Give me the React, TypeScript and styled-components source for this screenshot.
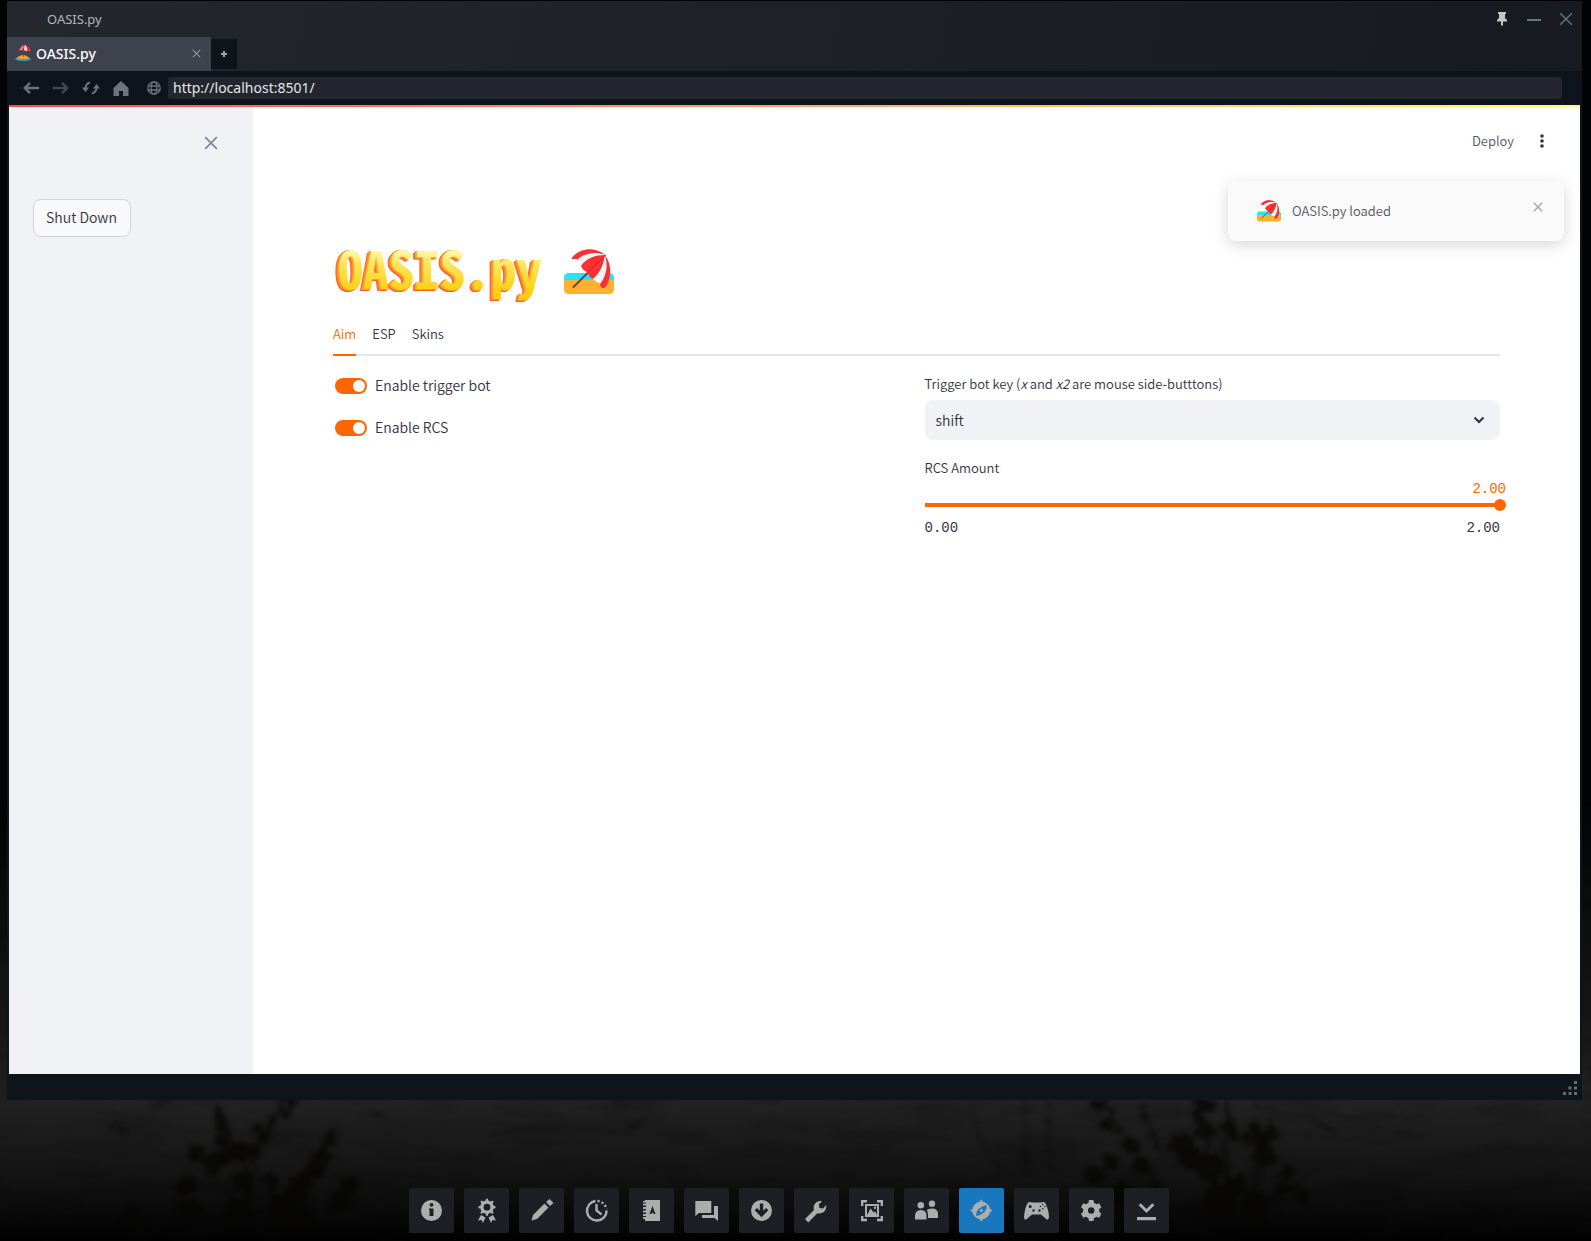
import React, { useState } from "react";
import styled, { createGlobalStyle, css } from "styled-components";

const chromeFont = `"Noto Sans", "Open Sans", sans-serif`;
const appFont = `"Noto Sans CJK SC", "Noto Sans", sans-serif`;
const monoFont = `"Liberation Mono", "DejaVu Sans Mono", monospace`;
const accent = "#ff6600";
const ink = "#31333f";

const GlobalStyle = createGlobalStyle`
  *, *::before, *::after { box-sizing: border-box; }
  body { margin: 0; background: #050505; }
  button, input, select { font: inherit; color: inherit; margin: 0; }
  button { background: none; border: 0; padding: 0; cursor: pointer; }
  svg { display: block; }
`;

const Desktop = styled.div`
  position: relative;
  isolation: isolate;
  min-height: 100vh;
  display: flex;
  flex-direction: column;
  padding: 1px 9px 8px 7px;
  background: #020304;
  overflow: hidden;
`;

const Wallpaper = styled.svg`
  position: absolute;
  z-index: -1;
  left: 0;
  bottom: 0;
  width: 100%;
  height: 440px;
`;

const Window = styled.main`
  flex: 1;
  display: flex;
  flex-direction: column;
  background: #0e141b;
`;

const Chrome = styled.header`
  font-family: ${chromeFont};
  background: linear-gradient(100deg, #25272f, #171a21);
`;

const TitleBar = styled.div`
  height: 36px;
  display: flex;
  align-items: center;
  padding-left: 40px;
  font-size: 13px;
  color: #b4b6b9;
`;

const WindowTitle = styled.span`
  flex: 1;
`;

const WindowButton = styled.button`
  width: 32px;
  height: 32px;
  display: grid;
  place-items: center;
  color: ${(p) => p.color ?? "#67757d"};
`;

const TabStrip = styled.div`
  display: flex;
  align-items: center;
  height: 34px;
`;

const BrowserTab = styled.div`
  width: 204px;
  height: 34px;
  display: flex;
  align-items: center;
  gap: 5px;
  padding: 0 8px 2px;
  background: #3d424d;
  color: #fff;
  font-size: 14px;
  font-weight: 500;
`;

const TabTitle = styled.span`
  flex: 1;
`;

const TabClose = styled.button`
  width: 14px;
  height: 14px;
  display: grid;
  place-items: center;
  color: #a0a3a8;
`;

const NewTab = styled.button`
  width: 26px;
  height: 30px;
  display: grid;
  place-items: center;
  background: #0e141b;
  color: #a5a59f;
`;

const AddressBar = styled.form`
  display: flex;
  align-items: center;
  height: 34px;
  padding: 0 20px 0 9px;
  background: #0e141b;
`;

const NavButton = styled.button<{ $dim?: boolean }>`
  width: 30px;
  height: 30px;
  display: grid;
  place-items: center;
  color: ${(p) => (p.$dim ? "#424750" : "#6e737e")};
`;

const SiteMark = styled.label`
  width: 32px;
  display: grid;
  place-items: center;
  padding-left: 3px;
  color: #6e737e;
`;

const UrlInput = styled.input`
  flex: 1;
  min-width: 0;
  height: 22px;
  padding: 0 5px;
  border: 0;
  border-radius: 3px;
  background: #23262e;
  color: #e4e6e8;
  font-size: 14px;
  line-height: 22px;
  outline: none;
`;

const Page = styled.div`
  position: relative;
  flex: 1;
  display: flex;
  flex-direction: column;
  margin: 0 2px;
  background: #fff;
  color: ${ink};
  font-family: ${appFont};
  font-weight: 350;
`;

const Rainbow = styled.div`
  height: 2px;
  background: linear-gradient(90deg, #ff4b4b, #fffd80);
`;

const PageBody = styled.div`
  flex: 1;
  display: flex;
`;

const Sidebar = styled.aside`
  width: 244px;
  flex: none;
  display: flex;
  flex-direction: column;
  align-items: flex-start;
  padding: 20px 26px 20px 24px;
  background: #f0f2f6;
`;

const SidebarClose = styled.button`
  align-self: flex-end;
  width: 32px;
  height: 32px;
  margin-bottom: 40px;
  display: grid;
  place-items: center;
  color: #808495;
`;

const ShutDownButton = styled.button`
  height: 38px;
  padding: 0 13px 2px 12px;
  border: 1px solid #d2d4d9;
  border-radius: 8px;
  background: #f9f9fb;
  font-size: 14px;
  line-height: 20px;
`;

const Main = styled.section`
  flex: 1;
  min-width: 0;
  display: flex;
  flex-direction: column;
`;

const Toolbar = styled.div`
  height: 68px;
  display: flex;
  justify-content: flex-end;
  align-items: center;
  gap: 16px;
  padding: 0 26px;
`;

const DeployButton = styled.button`
  font-size: 13px;
  line-height: 20px;
  color: #555763;
`;

const MenuButton = styled.button`
  width: 24px;
  height: 24px;
  display: grid;
  place-items: center;
`;

const Content = styled.div`
  padding: 64px 80px;
`;

const Heading = styled.div`
  display: flex;
  align-items: center;
  gap: 22px;
  height: 66px;
  margin-bottom: 11px;
`;

const Wordmark = styled.h1`
  margin: 0;
  padding: 0 0 10px 5px;
  font: 700 51px/64px "Noto Sans Mono CJK SC", "DejaVu Sans Mono", monospace;
  color: transparent;
  background: linear-gradient(#fffbb8 18%, #ffe65a 40%, #ffd012 75%);
  background-clip: text;
  -webkit-background-clip: text;
  filter: drop-shadow(-1px 0 0 #ffb52e) drop-shadow(-1px 1px 0 #ff9a2a)
    drop-shadow(-1px 0 0 #ff7d2c) drop-shadow(-1px 1px 0 #ff5f2c);
`;

const TabList = styled.div`
  display: flex;
  gap: 16px;
  border-bottom: 2px solid #e6e6e9;
`;

const Tab = styled.button<{ $active: boolean }>`
  height: 40px;
  margin-bottom: -2px;
  padding-bottom: 2px;
  border-bottom: 2px solid transparent;
  font-size: 13px;
  line-height: 20px;
  ${(p) =>
    p.$active &&
    css`
      color: ${accent};
      border-bottom-color: ${accent};
    `}
`;

const Columns = styled.div`
  display: grid;
  grid-template-columns: 1fr 1fr;
  gap: 16px;
  padding-top: 18px;
`;

const ToggleList = styled.div`
  display: flex;
  flex-direction: column;
  gap: 18px;
  margin-top: -1px;
  padding-left: 2px;
`;

const ToggleLabel = styled.label`
  display: flex;
  align-items: center;
  gap: 8px;
  font-size: 14px;
  line-height: 24px;
`;

const ToggleInput = styled.input`
  && {
    margin-top: 2px;
  }
  appearance: none;
  display: flex;
  align-items: center;
  width: 32px;
  height: 16px;
  padding: 0 2px;
  border-radius: 8px;
  background: #a3a8b8;
  &::after {
    content: "";
    width: 12px;
    height: 12px;
    border-radius: 50%;
    background: #fff;
  }
  &:checked {
    background: ${accent};
    justify-content: flex-end;
  }
`;

const Field = styled.div`
  display: flex;
  flex-direction: column;
  margin-bottom: 18px;
`;

const FieldLabel = styled.label`
  font-size: 13px;
  line-height: 20px;
  margin-bottom: 6px;
`;

const SelectBox = styled.div`
  display: grid;
  align-items: center;
  & > * {
    grid-area: 1 / 1;
  }
  & > svg {
    justify-self: end;
    margin-right: 12px;
    pointer-events: none;
  }
`;

const Select = styled.select`
  appearance: none;
  width: 100%;
  height: 40px;
  padding: 0 11px;
  border: 0;
  border-radius: 8px;
  background: #f0f2f6;
  font-size: 14px;
`;

const CurrentValue = styled.output`
  align-self: flex-end;
  margin: -5px -6px 0 0;
  font: 14px/20px ${monoFont};
  color: ${accent};
`;

const Slider = styled.input`
  appearance: none;
  height: 12px;
  width: calc(100% + 6px);
  background: linear-gradient(${accent}, ${accent}) left center / calc(100% - 6px) 4px no-repeat;
  &::-webkit-slider-thumb {
    appearance: none;
    width: 12px;
    height: 12px;
    border-radius: 50%;
    background: ${accent};
  }
`;

const SliderScale = styled.div`
  display: flex;
  justify-content: space-between;
  padding-top: 7px;
  font: 14px/20px ${monoFont};
`;

const Toast = styled.div`
  position: absolute;
  top: 76px;
  right: 16px;
  width: 336px;
  height: 60px;
  display: flex;
  align-items: center;
  gap: 11px;
  padding: 0 18px 0 29px;
  border-radius: 8px;
  background: #fafafa;
  box-shadow: 0 4px 16px rgba(0, 0, 0, 0.16);
  color: #54565f;
  font-size: 13px;
  line-height: 20px;
`;

const ToastText = styled.span`
  flex: 1;
`;

const ToastClose = styled.button`
  width: 16px;
  height: 16px;
  margin-bottom: 8px;
  display: grid;
  place-items: center;
  color: #a9aaad;
`;

const WindowFooter = styled.footer`
  height: 26px;
  display: flex;
  justify-content: flex-end;
  align-items: center;
  padding: 2px 5px 0;
  color: #686c72;
`;

const Dock = styled.nav`
  display: flex;
  justify-content: center;
  gap: 10px;
  padding: 88px 11px 0 0;
`;

const DockButton = styled.button<{ $active?: boolean }>`
  width: 45px;
  height: 45px;
  border-radius: 2px;
  color: #abadaf;
  background: ${(p) => (p.$active ? "#1977be" : "#1e1f25")};
`;

function Cross({ size, stroke }: { size: number; stroke: number }) {
  return (
    <svg width={size} height={size} viewBox="0 0 12 12" fill="none" stroke="currentColor" strokeWidth={stroke}>
      <path d="M1 1 11 11M11 1 1 11" />
    </svg>
  );
}

function Beach({ width }: { width: number }) {
  return (
    <svg width={width} viewBox="0 0 50 46" aria-hidden="true">
      <path d="M5 24H45Q50 24 50 29V34H0V29Q0 24 5 24Z" fill="#26e3fb" />
      <path d="M0 31H50V40Q50 45 45 45H5Q0 45 0 40Z" fill="#ffb02e" />
      <path d="M9.5 38 41 6.5" stroke="#6d4534" strokeWidth="1.8" strokeLinecap="round" />
      <path d="M8 10C7 7 18-1 27 .3C33 1 38 3 41 6C30 2 19 5 14 11C12 9 9 11 8 10Z" fill="#fb2f34" />
      <path d="M13.500 11C18 5 30 2 41 6C32 6 24 9 17.500 17C17 13 15 11 13.500 11Z" fill="#f4f4f4" />
      <path d="M17 17C22 9 32 6 41 6C40 15 36 24 30 30C26 29 25 27 24 24C22 22 18 21 17 17Z" fill="#fb2f34" />
      <path d="M29 30C36 24 40 15 41 6C45 15 44 26 37 35C35 34 32 33 29 30Z" fill="#f4f4f4" />
      <path d="M41 6C48 15 48 30 41 38.500C39 40 35 38 36.500 34.500C43 26 44 15 41 6Z" fill="#fb2f34" />
      <path d="M25 22.500 40 7.500" stroke="#b01e2c" strokeWidth=".8" />
    </svg>
  );
}

function Favicon() {
  return (
    <svg width="16" height="16" viewBox="0 0 16 16" aria-hidden="true">
      <ellipse cx="8" cy="14" rx="8" ry="2" fill="#3f8fd0" />
      <path d="M1.500 13.500Q4 10 8 10Q12 10 14.500 13.500Q8 15 1.500 13.500Z" fill="#f2a12e" />
      <path d="M9 5 8.500 11.500" stroke="#70482f" />
      <path d="M3.500 6Q4 .5 10 0Q16 1.500 15.500 7Q13 5.500 12 6.500Q10 4.500 8 5.500Q6 4.500 3.500 6Z" fill="#de2d42" />
      <path d="M6.500 4.900Q7 2 10 0Q7 1 5 5.200ZM10 0Q9 3 9 5.200Q10.500 5 12 6.500Q13 3 10 0Z" fill="#f5eee5" />
    </svg>
  );
}

function gearPath(cx: number, cy: number, outer: number, inner: number, teeth: number, share: number) {
  const points: string[] = [];
  for (let i = 0; i < teeth; i++) {
    const mid = -Math.PI / 2 + (i * 2 * Math.PI) / teeth;
    const step = Math.PI / teeth;
    const spots: [number, number][] = [
      [mid - step * (share + 0.15), inner],
      [mid - step * share * 0.8, outer],
      [mid + step * share * 0.8, outer],
      [mid + step * (share + 0.15), inner],
    ];
    spots.forEach(([a, r]) => points.push(`${(cx + r * Math.cos(a)).toFixed(2)} ${(cy + r * Math.sin(a)).toFixed(2)}`));
  }
  return `M${points.join("L")}Z`;
}

const hole = (cx: number, cy: number, r: number) => `M${cx - r} ${cy}a${r} ${r} 0 1 0 ${2 * r} 0a${r} ${r} 0 1 0 ${-2 * r} 0Z`;

const dockItems: { name: string; active?: boolean; art: React.ReactNode }[] = [
  {
    name: "Game info",
    art: <path fillRule="evenodd" d={`${hole(22.5, 22.5, 10.5)}${hole(22.5, 16.8, 1.9)}M20 20.500H24.500V28H20.500V22H20Z`} />,
  },
  {
    name: "Achievements",
    art: (
      <>
        <path fillRule="evenodd" d={`${gearPath(23, 19.2, 8.6, 6.8, 8, 0.35)}${hole(23, 19.2, 3.4)}`} />
        <path d="M17 27 21.500 29.500 19 35 17.500 32 14 32.500ZM29 27 24.500 29.500 27 35 28.500 32 32 32.500Z" />
      </>
    ),
  },
  {
    name: "Notes",
    art: <path d="M12.500 32.500 14 27 25.500 15.500 29.500 19.500 18 31ZM27 14 30.500 11 34.500 15 31 18Z" />,
  },
  {
    name: "Clock",
    art: (
      <>
        <path fill="none" stroke="currentColor" strokeWidth="2.400" d="M21.500 13A9.800 9.800 0 1 0 32.600 22.500M22.500 16V22.500L27.500 26.500" />
        <path fill="none" stroke="currentColor" strokeWidth="2.400" strokeDasharray="2.200 2" d="M23.500 13A9.800 9.800 0 0 1 32.400 21" />
      </>
    ),
  },
  {
    name: "Guides",
    art: (
      <path
        fillRule="evenodd"
        d="M16 12H31V33H16V31H14V29H17V28H14V26H17V24.500H14V22.500H17V21H14V19H17V17.500H14V15.500H17V14.500H14V13H16ZM23.500 18 20.500 26H22L23.500 24.500 25 26H26.500Z"
      />
    ),
  },
  {
    name: "Discussions",
    art: <path d="M11.300 13H27.300V25H15L11.300 28ZM30 18H34V33L30.500 30H18V27H30Z" />,
  },
  {
    name: "Downloads",
    art: (
      <path fillRule="evenodd" d={`${hole(22.5, 22.5, 10.5)}M20.800 15.500H24.200V22.800L27 20 29.300 22.300 22.500 29.300 15.700 22.300 18 20 20.800 22.800Z`} />
    ),
  },
  {
    name: "Workshop",
    art: (
      <path d="M11 31 20 22C18.500 17.500 22 12 28 13.200L24.800 16.500 25.500 20 29 20.500 32.200 17C33 23 28 26.500 23.300 25.200L14.300 34.500Z" />
    ),
  },
  {
    name: "Screenshots",
    art: (
      <>
        <path fill="none" stroke="currentColor" strokeWidth="2.400" d="M13.200 18V13.200H18M28 13.200H32.800V18M32.800 28V32H28M18 32H13.200V28" />
        <path fillRule="evenodd" d={`M16 16H30V29H16ZM18 18V27L21.500 20.500 25 25 26 23.500 28 27V18Z`} />
        <path d="M18.500 27.200 21.800 20.800 24.500 25 26 23.500 28 27.200Z" />
        <circle cx="26" cy="19.800" r="1.200" />
      </>
    ),
  },
  {
    name: "Friends",
    art: (
      <>
        <circle cx="16.800" cy="17.200" r="3.300" />
        <path d="M11 31.500V28Q11 22 17 22Q22.500 22 22.500 28V31.500Z" />
        <circle cx="28" cy="15.800" r="3.200" />
        <path d="M24 30V27Q24 24 22.700 22Q24.500 20.500 28 20.500Q34 20.500 34 26V30Z" />
      </>
    ),
  },
  {
    name: "Web browser",
    active: true,
    art: (
      <path
        fillRule="evenodd"
        d={`${hole(22.3, 22.5, 9)}M17 28Q17 19 28 17Q28 26 17 28ZM20.700 22.500a1.600 1.600 0 1 0 3.200 0a1.600 1.600 0 1 0-3.200 0ZM20.500 13.500 22.300 11.500 24.100 13.500ZM20.500 31.500 22.300 33.500 24.100 31.500ZM13.300 20.700 11.300 22.500 13.300 24.300ZM31.300 20.700 33.300 22.500 31.300 24.300Z`}
      />
    ),
  },
  {
    name: "Controller",
    art: (
      <path
        fillRule="evenodd"
        d={`M14 14.500Q16 13.500 18 14.500H27Q29 13.500 31 14.500Q35 22 35 29.500Q34 33.500 31 30L27 26.500H18L14 30Q10.500 33.500 10 29.500Q10.500 20 14 14.500Z${hole(16.2, 18.5, 1.5)}${hole(19.5, 22.5, 1.2)}${hole(25.5, 22.5, 1.2)}${hole(26.5, 18.5, 0.8)}${hole(31, 18.5, 0.8)}${hole(28.8, 16.5, 0.8)}${hole(28.8, 20.7, 0.8)}`}
      />
    ),
  },
  {
    name: "Settings",
    art: <path fillRule="evenodd" d={`${gearPath(22.2, 22.5, 10.7, 8.2, 6, 0.5)}${hole(22.2, 22.5, 3.2)}`} />,
  },
  {
    name: "Hide overlay",
    art: (
      <>
        <path fill="none" stroke="currentColor" strokeWidth="3" d="M15.700 16.300 22.500 23 29.300 16.300" />
        <path d="M13 29H32V32.200H13Z" />
      </>
    ),
  },
];

/* Clusters of leaves as x, y, radius, over the lower part of the wallpaper. */
const leaves: [number, number, number][] = [
  [217, 352, 3], [220, 362, 5], [223, 370, 6], [222, 385, 7], [196, 397, 8], [212, 407, 10], [240, 395, 11], [258, 372, 5],
  [272, 365, 5], [286, 358, 6], [292, 346, 6], [264, 382, 5], [254, 396, 7], [226, 400, 8], [333, 385, 6], [322, 402, 8],
  [316, 414, 9], [300, 430, 13], [350, 428, 9], [186, 430, 10], [240, 425, 9], [270, 425, 7], [340, 445, 10], [280, 450, 12],
  [190, 455, 12], [130, 460, 8], [238, 455, 14], [300, 460, 14],
  [1097, 349, 6], [1106, 368, 7], [1200, 346, 6], [1208, 350, 6], [1198, 360, 6], [1206, 375, 9], [1227, 357, 4],
  [1228, 370, 7], [1234, 378, 6], [1254, 372, 5], [1262, 384, 9], [1246, 382, 5], [1272, 378, 7], [1182, 390, 12], [1190, 402, 12],
  [1264, 400, 10], [1288, 416, 7], [1284, 430, 7], [1210, 410, 14], [1236, 430, 10], [1130, 390, 7], [1110, 405, 8],
  [1142, 410, 8], [1095, 420, 9], [1302, 442, 7], [1220, 445, 16], [1255, 450, 14], [1120, 440, 12],
];

const stems =
  "M218 354Q222 380 238 405T250 480M290 340Q276 370 262 395T245 480M336 380Q320 405 300 430T270 480M1103 345Q1110 375 1140 410T1150 480M1142 360Q1148 385 1165 410M1200 345Q1200 390 1225 480M1228 355Q1220 400 1235 480M1270 375Q1262 410 1245 480M1302 440Q1270 440 1250 480";

const twigs = "M972 360Q970 385 1002 425M1024 350Q1026 390 1028 430M1052 350Q1046 380 1050 420";

const cracks = "M110 378l8 4 10 6M182 342l-10 10-16 8M370 362l12 8M616 352l5 6-1 3M642 372l-4 6-12 8M1250 358l22 6M1310 376l24 8";

function Backdrop() {
  return (
    <Wallpaper viewBox="0 0 1591 440" preserveAspectRatio="xMidYMax slice" aria-hidden="true">
      <defs>
        <linearGradient id="ground" x1="0" y1="0" x2="0" y2="1">
          <stop offset="0" stopColor="#020304" />
          <stop offset=".52" stopColor="#181818" />
          <stop offset=".68" stopColor="#222" />
          <stop offset=".84" stopColor="#151515" />
          <stop offset="1" stopColor="#020202" />
        </linearGradient>
        <filter id="leaf" filterUnits="userSpaceOnUse" x="0" y="280" width="1591" height="160" colorInterpolationFilters="sRGB">
          <feTurbulence type="fractalNoise" baseFrequency=".14" numOctaves="2" seed="4" result="n" />
          <feDisplacementMap in="SourceGraphic" in2="n" scale="14" xChannelSelector="R" yChannelSelector="G" />
          <feGaussianBlur stdDeviation="2" />
        </filter>
        <filter id="grain" x="0" y="0" width="100%" height="100%" colorInterpolationFilters="sRGB">
          <feTurbulence type="fractalNoise" baseFrequency=".012 .05" numOctaves="4" seed="9" />
          <feColorMatrix values="0 0 0 0 0  0 0 0 0 0  0 0 0 0 0  1.600 0 0 0 -.7" />
        </filter>
      </defs>
      <rect width="1591" height="440" fill="url(#ground)" />
      <rect width="1591" height="440" filter="url(#grain)" opacity=".3" />
      <g filter="url(#leaf)" opacity=".75">
        <g transform="translate(0 -55)" fill="#060504" stroke="#060504">
          <path d={stems} fill="none" strokeWidth="3" />
          <path d={twigs} fill="none" strokeWidth="2" opacity=".5" />
          <path d={cracks} fill="none" strokeWidth="2" />
          {leaves.map(([x, y, r]) => (
            <circle key={`${x}-${y}`} cx={x} cy={y + 10} r={r} />
          ))}
        </g>
      </g>
    </Wallpaper>
  );
}

export default function App() {
  const [tab, setTab] = useState("Aim");
  const [trigger, setTrigger] = useState(true);
  const [rcs, setRcs] = useState(true);
  const [amount, setAmount] = useState(2);
  const [url, setUrl] = useState("http://localhost:8501/");

  return (
    <Desktop>
      <GlobalStyle />
      <Backdrop />
      <Window>
        <Chrome>
          <TitleBar>
            <WindowTitle>OASIS.py</WindowTitle>
            <WindowButton aria-label="Pin window" color="#c3c5c6">
              <svg width="10" height="14" viewBox="0 0 10 14" fill="currentColor">
                <path d="M1 0H9V2H8V6L10 8V9.500H6V13L5 14 4 13V9.500H0V8L2 6V2H1Z" />
              </svg>
            </WindowButton>
            <WindowButton aria-label="Minimize">
              <svg width="14" height="14" viewBox="0 0 14 14" fill="currentColor">
                <path d="M0 7H14V9H0Z" />
              </svg>
            </WindowButton>
            <WindowButton aria-label="Close window">
              <Cross size={14} stroke={1.2} />
            </WindowButton>
          </TitleBar>
          <TabStrip>
            <BrowserTab>
              <Favicon />
              <TabTitle>OASIS.py</TabTitle>
              <TabClose aria-label="Close tab">
                <Cross size={9} stroke={1.4} />
              </TabClose>
            </BrowserTab>
            <NewTab aria-label="New tab">
              <svg width="6" height="6" viewBox="0 0 6 6" fill="currentColor">
                <path d="M2 0H4V2H6V4H4V6H2V4H0V2H2Z" />
              </svg>
            </NewTab>
          </TabStrip>
          <AddressBar onSubmit={(e) => e.preventDefault()}>
            <NavButton type="button" aria-label="Back">
              <svg width="16" height="12" viewBox="0 0 16 12" fill="none" stroke="currentColor" strokeWidth="2.400">
                <path d="M16 6H2M7 .8 1.800 6 7 11.200" />
              </svg>
            </NavButton>
            <NavButton type="button" aria-label="Forward" $dim>
              <svg width="16" height="12" viewBox="0 0 16 12" fill="none" stroke="currentColor" strokeWidth="2.400">
                <path d="M0 6H14M9 .8 14.200 6 9 11.200" />
              </svg>
            </NavButton>
            <NavButton type="button" aria-label="Reload">
              <svg width="18" height="14" viewBox="0 0 18 14" fill="currentColor">
                <path fill="none" stroke="currentColor" strokeWidth="2" d="M8 1.500Q3.500 2.500 3.500 8M10 12.500Q14.500 11.500 14.500 6" />
                <path d="M0 6.500H7L3.500 11ZM11 7.500H18L14.500 3Z" />
              </svg>
            </NavButton>
            <NavButton type="button" aria-label="Home">
              <svg width="16" height="15" viewBox="0 0 16 15" fill="currentColor">
                <path d="M8 0 15.500 7V15H10V10H6V15H.5V7Z" />
              </svg>
            </NavButton>
            <SiteMark htmlFor="url" aria-label="Address">
              <svg width="14" height="14" viewBox="0 0 14 14" fill="none" stroke="currentColor" strokeWidth="1.300">
                <circle cx="7" cy="7" r="6.200" />
                <ellipse cx="7" cy="7" rx="2.900" ry="6.200" />
                <path d="M1.200 5H12.800M1.200 9H12.800" />
              </svg>
            </SiteMark>
            <UrlInput id="url" value={url} onChange={(e) => setUrl(e.target.value)} spellCheck={false} />
          </AddressBar>
        </Chrome>

        <Page>
          <Rainbow />
          <PageBody>
            <Sidebar>
              <SidebarClose aria-label="Close sidebar">
                <Cross size={14} stroke={1.5} />
              </SidebarClose>
              <ShutDownButton>Shut Down</ShutDownButton>
            </Sidebar>
            <Main>
              <Toolbar>
                <DeployButton>Deploy</DeployButton>
                <MenuButton aria-label="Main menu">
                  <svg width="4" height="14" viewBox="0 0 4 14" fill="currentColor">
                    <circle cx="2" cy="2" r="1.800" />
                    <circle cx="2" cy="7" r="1.800" />
                    <circle cx="2" cy="12" r="1.800" />
                  </svg>
                </MenuButton>
              </Toolbar>
              <Content>
                <Heading>
                  <Wordmark>OASIS.py</Wordmark>
                  <Beach width={50} />
                </Heading>
                <TabList role="tablist">
                  {["Aim", "ESP", "Skins"].map((name) => (
                    <Tab key={name} role="tab" aria-selected={tab === name} $active={tab === name} onClick={() => setTab(name)}>
                      {name}
                    </Tab>
                  ))}
                </TabList>
                <Columns>
                  <ToggleList>
                    <ToggleLabel>
                      <ToggleInput type="checkbox" checked={trigger} onChange={(e) => setTrigger(e.target.checked)} />
                      Enable trigger bot
                    </ToggleLabel>
                    <ToggleLabel>
                      <ToggleInput type="checkbox" checked={rcs} onChange={(e) => setRcs(e.target.checked)} />
                      Enable RCS
                    </ToggleLabel>
                  </ToggleList>
                  <div>
                    <Field>
                      <FieldLabel htmlFor="key">
                        Trigger bot key (<em>x</em> and <em>x2</em> are mouse side-butttons)
                      </FieldLabel>
                      <SelectBox>
                        <Select id="key" defaultValue="shift">
                          <option>shift</option>
                          <option>x</option>
                          <option>x2</option>
                        </Select>
                        <svg width="18" height="18" viewBox="0 0 18 18" fill="none" stroke="currentColor" strokeWidth="2">
                          <path d="M4.500 6.500 9 11 13.500 6.500" />
                        </svg>
                      </SelectBox>
                    </Field>
                    <Field>
                      <FieldLabel htmlFor="amount">RCS Amount</FieldLabel>
                      <CurrentValue htmlFor="amount">{amount.toFixed(2)}</CurrentValue>
                      <Slider
                        id="amount"
                        type="range"
                        min={0}
                        max={2}
                        step={0.01}
                        value={amount}
                        onChange={(e) => setAmount(Number(e.target.value))}
                      />
                      <SliderScale>
                        <span>0.00</span>
                        <span>2.00</span>
                      </SliderScale>
                    </Field>
                  </div>
                </Columns>
              </Content>
            </Main>
          </PageBody>
          <Toast role="status">
            <Beach width={24} />
            <ToastText>OASIS.py loaded</ToastText>
            <ToastClose aria-label="Dismiss">
              <Cross size={10} stroke={1.8} />
            </ToastClose>
          </Toast>
        </Page>
        <WindowFooter>
          <svg width="14" height="14" viewBox="0 0 14 14" fill="currentColor" aria-hidden="true">
            <path d="M11 0h3v3h-3zM5.500 5.500h3v3h-3zM11 5.500h3v3h-3zM0 11h3v3h-3zM5.500 11h3v3h-3zM11 11h3v3h-3z" />
          </svg>
        </WindowFooter>
      </Window>
      <Dock aria-label="Overlay">
        {dockItems.map((item) => (
          <DockButton key={item.name} aria-label={item.name} $active={item.active}>
            <svg width="45" height="45" viewBox="0 0 45 45" fill="currentColor">
              {item.art}
            </svg>
          </DockButton>
        ))}
      </Dock>
    </Desktop>
  );
}
